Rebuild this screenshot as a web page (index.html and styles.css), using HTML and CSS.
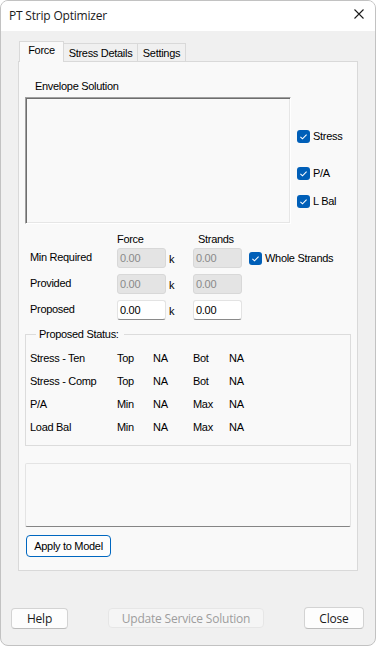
FILE: index.html
```html
<!DOCTYPE html>
<html>
<head>
<meta charset="utf-8">
<title>PT Strip Optimizer</title>
<link rel="stylesheet" href="styles.css">
</head>
<body>
<div class="window">
  <div class="titlebar">
    <span class="title">PT Strip Optimizer</span>
    <svg class="close-x" width="10" height="10" viewBox="0 0 10 10"><path d="M0.5 0.5 L9.5 9.5 M9.5 0.5 L0.5 9.5" stroke="#1b1b1b" stroke-width="1.1" fill="none"/></svg>
  </div>
  <div class="content">
    <div class="tabs">
      <div class="tab active">Force</div>
      <div class="tab t-stress">Stress Details</div>
      <div class="tab t-settings">Settings</div>
    </div>
    <div class="panel">
      <div class="env-label">Envelope Solution</div>
      <div class="env-row">
        <div class="env-box"></div>
        <div class="env-checks">
          <div class="check c-stress"><svg class="cb" width="13" height="13" viewBox="0 0 13 13"><rect width="13" height="13" rx="3" fill="#005fb8"/><path d="M3.4 6.8 L5.5 8.8 L9.6 4.6" stroke="#fff" stroke-width="1.1" fill="none"/></svg><span>Stress</span></div>
          <div class="check c-pa"><svg class="cb" width="13" height="13" viewBox="0 0 13 13"><rect width="13" height="13" rx="3" fill="#005fb8"/><path d="M3.4 6.8 L5.5 8.8 L9.6 4.6" stroke="#fff" stroke-width="1.1" fill="none"/></svg><span>P/A</span></div>
          <div class="check c-lbal"><svg class="cb" width="13" height="13" viewBox="0 0 13 13"><rect width="13" height="13" rx="3" fill="#005fb8"/><path d="M3.4 6.8 L5.5 8.8 L9.6 4.6" stroke="#fff" stroke-width="1.1" fill="none"/></svg><span>L Bal</span></div>
        </div>
      </div>
      <div class="force-grid">
        <div></div><div class="hdr">Force</div><div></div><div class="hdr strands">Strands</div><div></div>

        <div class="lbl">Min Required</div>
        <div class="inp dis">0.00</div>
        <div class="unit">k</div>
        <div class="inp dis">0.00</div>
        <div class="check c-whole"><svg class="cb" width="13" height="13" viewBox="0 0 13 13"><rect width="13" height="13" rx="3" fill="#005fb8"/><path d="M3.4 6.8 L5.5 8.8 L9.6 4.6" stroke="#fff" stroke-width="1.1" fill="none"/></svg><span>Whole Strands</span></div>

        <div class="lbl">Provided</div>
        <div class="inp dis">0.00</div>
        <div class="unit">k</div>
        <div class="inp dis">0.00</div>
        <div></div>

        <div class="lbl">Proposed</div>
        <div class="inp">0.00</div>
        <div class="unit">k</div>
        <div class="inp">0.00</div>
        <div></div>
      </div>
      <fieldset class="status">
        <legend>Proposed Status:</legend>
        <div class="status-grid">
          <div>Stress - Ten</div><div>Top</div><div>NA</div><div>Bot</div><div>NA</div>
          <div>Stress - Comp</div><div>Top</div><div>NA</div><div>Bot</div><div>NA</div>
          <div>P/A</div><div>Min</div><div>NA</div><div>Max</div><div>NA</div>
          <div>Load Bal</div><div>Min</div><div>NA</div><div>Max</div><div>NA</div>
        </div>
      </fieldset>
      <div class="msg-box"></div>
      <button class="apply">Apply to Model</button>
    </div>
  </div>
  <div class="footer">
    <button class="btn help">Help</button>
    <button class="btn disabled">Update Service Solution</button>
    <button class="btn close">Close</button>
  </div>
</div>
</body>
</html>
```

FILE: styles.css
```css
* { box-sizing: border-box; }
html, body { margin: 0; padding: 0; background: #ffffff; }
body { width: 376px; height: 646px; }

.window {
  width: 376px;
  height: 646px;
  border: 1px solid #c2c2c2;
  border-radius: 8px;
  overflow: hidden;
  background: #f0f0f0;
  font-family: "Liberation Sans", Arial, sans-serif;
  font-size: 11px;
  letter-spacing: -0.3px;
  color: #000;
}

.titlebar {
  height: 30px;
  background: #ffffff;
  display: flex;
  justify-content: space-between;
  align-items: flex-start;
  padding: 0 11px 0 8px;
}
.title {
  font-family: "Open Sans", "Noto Sans", sans-serif;
  font-size: 12px;
  letter-spacing: -0.2px;
  line-height: 30px;
  color: #1a1a1a;
}
.close-x { margin-top: 8px; }

.content { padding: 10px 0 0 17px; }

.tabs {
  display: flex;
  align-items: flex-end;
  margin-left: 1px;
  margin-bottom: -1px;
  height: 21px;
}
.tab {
  border: 1px solid #d9d9d9;
  border-bottom: none;
  background: #f0f0f0;
  text-align: center;
  line-height: 13px;
  padding-top: 3px;
  height: 18px;
  margin-bottom: 1px;
}
.tab.active {
  width: 45px;
  height: 21px;
  margin-bottom: 0;
  background: #f9f9f9;
  position: relative;
  z-index: 1;
  padding-top: 2px;
}
.t-stress { width: 75px; margin-left: -1px; }
.t-settings { width: 49px; margin-left: -1px; }

.panel {
  width: 340px;
  height: 510px;
  border: 1px solid #d9d9d9;
  background: #f9f9f9;
  padding: 18px 0 0 6px;
}

.env-label { margin-left: 10px; line-height: 13px; }

.env-row { display: flex; margin-top: 4px; }
.env-box {
  width: 266px;
  height: 127px;
  background: #f9f9f9;
  border-top: 1px solid #a0a0a0;
  border-left: 1px solid #a0a0a0;
  border-right: 1px solid #ffffff;
  border-bottom: 1px solid #ffffff;
  box-shadow: inset 1px 1px 0 #6e6e6e, inset -1px -1px 0 #e6e6e6;
}
.env-checks {
  display: flex;
  flex-direction: column;
  margin-left: 6px;
  padding-top: 33px;
}
.check {
  display: flex;
  align-items: center;
  height: 13px;
  line-height: 13px;
  white-space: nowrap;
}
.check .cb { flex: none; margin-right: 3px; }
.c-pa { margin-top: 24px; }
.c-lbal { margin-top: 15px; }

.force-grid {
  display: grid;
  grid-template-columns: 87px 49px 27px 49px auto;
  grid-template-rows: 15px 26px 26px 20px;
  padding-left: 5px;
  margin-top: 9px;
  line-height: 13px;
}
.hdr { line-height: 13px; }
.hdr.strands { padding-left: 5px; }
.lbl { padding-top: 3px; }
.unit { padding-top: 5px; padding-left: 3px; }
.inp {
  height: 20px;
  line-height: 18px;
  border: 1px solid #e3e3e3;
  border-bottom-color: #8a8a8a;
  border-radius: 3px;
  background: #ffffff;
  padding-left: 2px;
  color: #000;
}
.inp.dis {
  background: #e4e4e4;
  border-color: #d8d8d8;
  color: #8a8a8a;
}
.c-whole { margin-top: 4px; margin-left: 7px; }

.status {
  margin: 8px 0 0 0;
  width: 326px;
  border: 1px solid #dcdcdc;
  padding: 6px 0 6px 4px;
  min-width: 0;
}
.status legend {
  margin-left: 6px;
  padding: 0 5px 0 3px;
  line-height: 13px;
}
.status-grid {
  display: grid;
  grid-template-columns: 87px 36px 40px 36px auto;
  grid-auto-rows: 23px;
  line-height: 23px;
}

.msg-box {
  margin-top: 17px;
  width: 326px;
  height: 64px;
  border: 1px solid #e4e4e4;
  border-bottom-color: #858585;
  border-radius: 2px;
  background: #f9f9f9;
}

.apply {
  display: block;
  margin: 8px 0 0 1px;
  width: 85px;
  height: 22px;
  padding: 0;
  border: 1px solid #0067c0;
  border-radius: 4px;
  background: #fdfdfd;
  font-family: "Liberation Sans", Arial, sans-serif;
  font-size: 11px;
  letter-spacing: -0.3px;
  color: #000;
  line-height: 20px;
}

.footer {
  display: flex;
  justify-content: space-between;
  align-items: flex-end;
  padding: 36px 11px 0 10px;
}
.btn {
  padding: 0;
  border: 1px solid #d3d3d3;
  border-bottom-color: #bcbcbc;
  border-radius: 4px;
  background: #fdfdfd;
  font-family: "Open Sans", "Noto Sans", sans-serif;
  font-size: 12px;
  letter-spacing: -0.2px;
  color: #1a1a1a;
}
.help { width: 57px; height: 21px; }
.disabled {
  width: 156px;
  height: 20px;
  margin-bottom: 1px;
  background: #f5f5f5;
  border-color: #e6e6e6;
  color: #9d9d9d;
}
.close { width: 60px; height: 22px; }
```
